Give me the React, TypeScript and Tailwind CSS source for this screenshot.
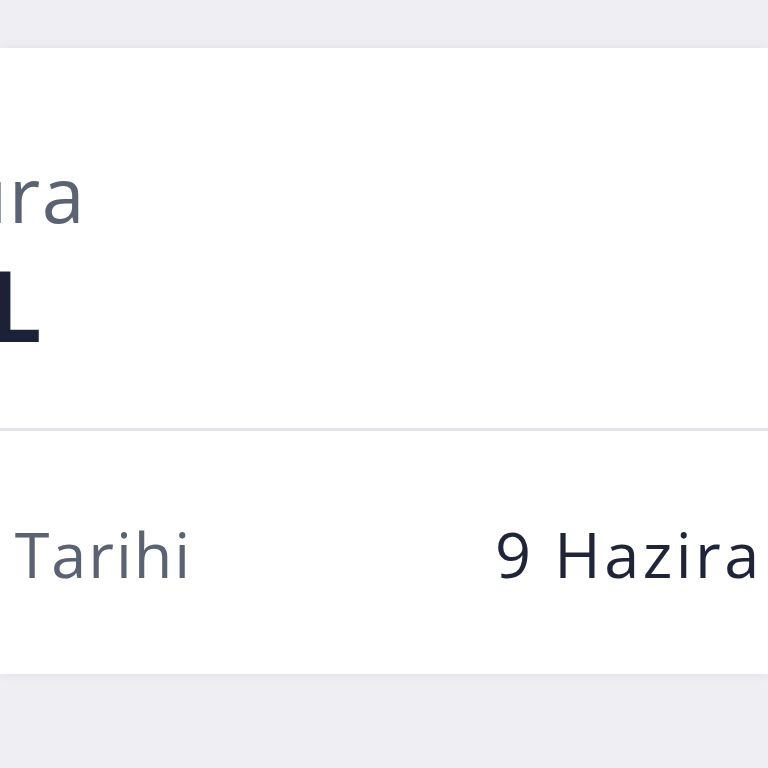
import React from 'react';

const font = { fontFamily: '"Open Sans", "Noto Sans", sans-serif' };

const RightEdge: React.FC<{ width: string; className: string; children: React.ReactNode }> = ({ width, className, children }) => (
  <div className={`flex justify-end whitespace-nowrap ${width}`}>
    <span className={className}>{children}</span>
  </div>
);

export default function App() {
  return (
    <div className="w-[768px] h-[768px] overflow-hidden bg-[#efeff3] pt-[48px]" style={font}>
      <div className="bg-white shadow-[0_0_10px_rgba(30,35,60,0.08)]">
        <div className="pt-[107px] pb-[75px]">
          <RightEdge width="w-[86px]" className="text-[77px] leading-none text-[#5b6372] tracking-[0.02em]">
            Fatura
          </RightEdge>
          <div className="mt-[23px]">
            <RightEdge width="w-[42px]" className="text-[98px] leading-none font-bold text-[#1c2138]">
              1.250,00 TL
            </RightEdge>
          </div>
        </div>
        <div className="h-[3px] bg-[#e4e5eb]" />
        <div className="flex items-start pt-[91px] pb-[89px]">
          <RightEdge width="w-[192px] shrink-0" className="text-[63px] leading-none text-[#5b6372] tracking-[0.03em] [word-spacing:12px]">
            Son Ödeme Tarihi
          </RightEdge>
          <div className="ml-[303px] whitespace-nowrap text-[63px] leading-none tracking-[0.055em] text-[#1f2438]">
            9 Haziran 2023
          </div>
        </div>
      </div>
    </div>
  );
}
